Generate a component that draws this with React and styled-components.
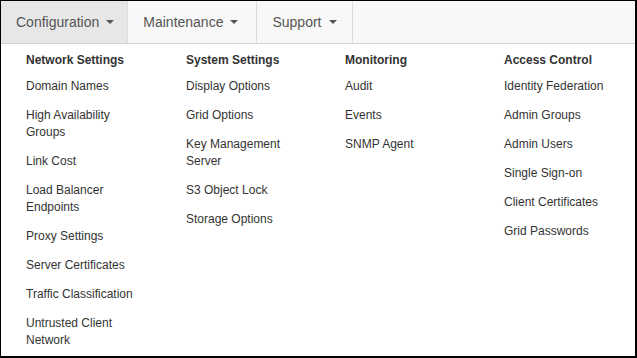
import React from 'react';
import styled, { createGlobalStyle } from 'styled-components';

const GlobalStyle = createGlobalStyle`
  html, body {
    margin: 0;
    padding: 0;
    background: #ffffff;
  }
  body {
    font-family: "Liberation Sans", Arial, sans-serif;
  }
`;

const menus = [
  {
    title: 'Network Settings',
    items: [
      'Domain Names',
      'High Availability Groups',
      'Link Cost',
      'Load Balancer Endpoints',
      'Proxy Settings',
      'Server Certificates',
      'Traffic Classification',
      'Untrusted Client Network',
    ],
  },
  {
    title: 'System Settings',
    items: ['Display Options', 'Grid Options', 'Key Management Server', 'S3 Object Lock', 'Storage Options'],
  },
  {
    title: 'Monitoring',
    items: ['Audit', 'Events', 'SNMP Agent'],
  },
  {
    title: 'Access Control',
    items: [
      'Identity Federation',
      'Admin Groups',
      'Admin Users',
      'Single Sign-on',
      'Client Certificates',
      'Grid Passwords',
    ],
  },
];

const Frame = styled.div`
  width: 637px;
  height: 358px;
  box-sizing: border-box;
  border-style: solid;
  border-color: #000;
  border-width: 1px 2px 2px 1px;
  background: #fff;
  overflow: hidden;
`;

const Navbar = styled.nav`
  display: flex;
  height: 42px;
  background: #f8f8f8;
  border-bottom: 1px solid #d3d3d3;
`;

const NavItem = styled.div`
  display: flex;
  align-items: center;
  padding: 0 ${p => p.padRight || 15}px 0 15px;
  font-size: 14px;
  color: #555;
  border-right: 1px solid #dcdcdc;
  background: ${p => (p.active ? '#e7e7e7' : 'transparent')};
`;

const Caret = styled.span`
  display: inline-block;
  width: 0;
  height: 0;
  margin-left: 7px;
  border-top: 4px solid #555;
  border-left: 4px solid transparent;
  border-right: 4px solid transparent;
`;

const Dropdown = styled.div`
  display: grid;
  grid-template-columns: 160px 159px 159px 1fr;
  padding: 8px 0 0 25px;
`;

const Column = styled.div`
  display: flex;
  flex-direction: column;
`;

const Heading = styled.div`
  font-size: 12px;
  line-height: 17px;
  font-weight: bold;
  color: #333;
  margin-bottom: 9px;
`;

const Link = styled.a`
  display: block;
  width: 120px;
  font-size: 12px;
  line-height: 17px;
  color: #333;
  text-decoration: none;
  margin-bottom: 12px;
`;

export default function App() {
  return (
    <>
      <GlobalStyle />
      <Frame>
        <Navbar>
          <NavItem active padRight={13}>
            Configuration<Caret />
          </NavItem>
          <NavItem padRight={18}>
            Maintenance<Caret />
          </NavItem>
          <NavItem padRight={15}>
            Support<Caret />
          </NavItem>
        </Navbar>
        <Dropdown>
          {menus.map(menu => (
            <Column key={menu.title}>
              <Heading>{menu.title}</Heading>
              {menu.items.map(item => (
                <Link key={item} href="#">
                  {item}
                </Link>
              ))}
            </Column>
          ))}
        </Dropdown>
      </Frame>
    </>
  );
}
